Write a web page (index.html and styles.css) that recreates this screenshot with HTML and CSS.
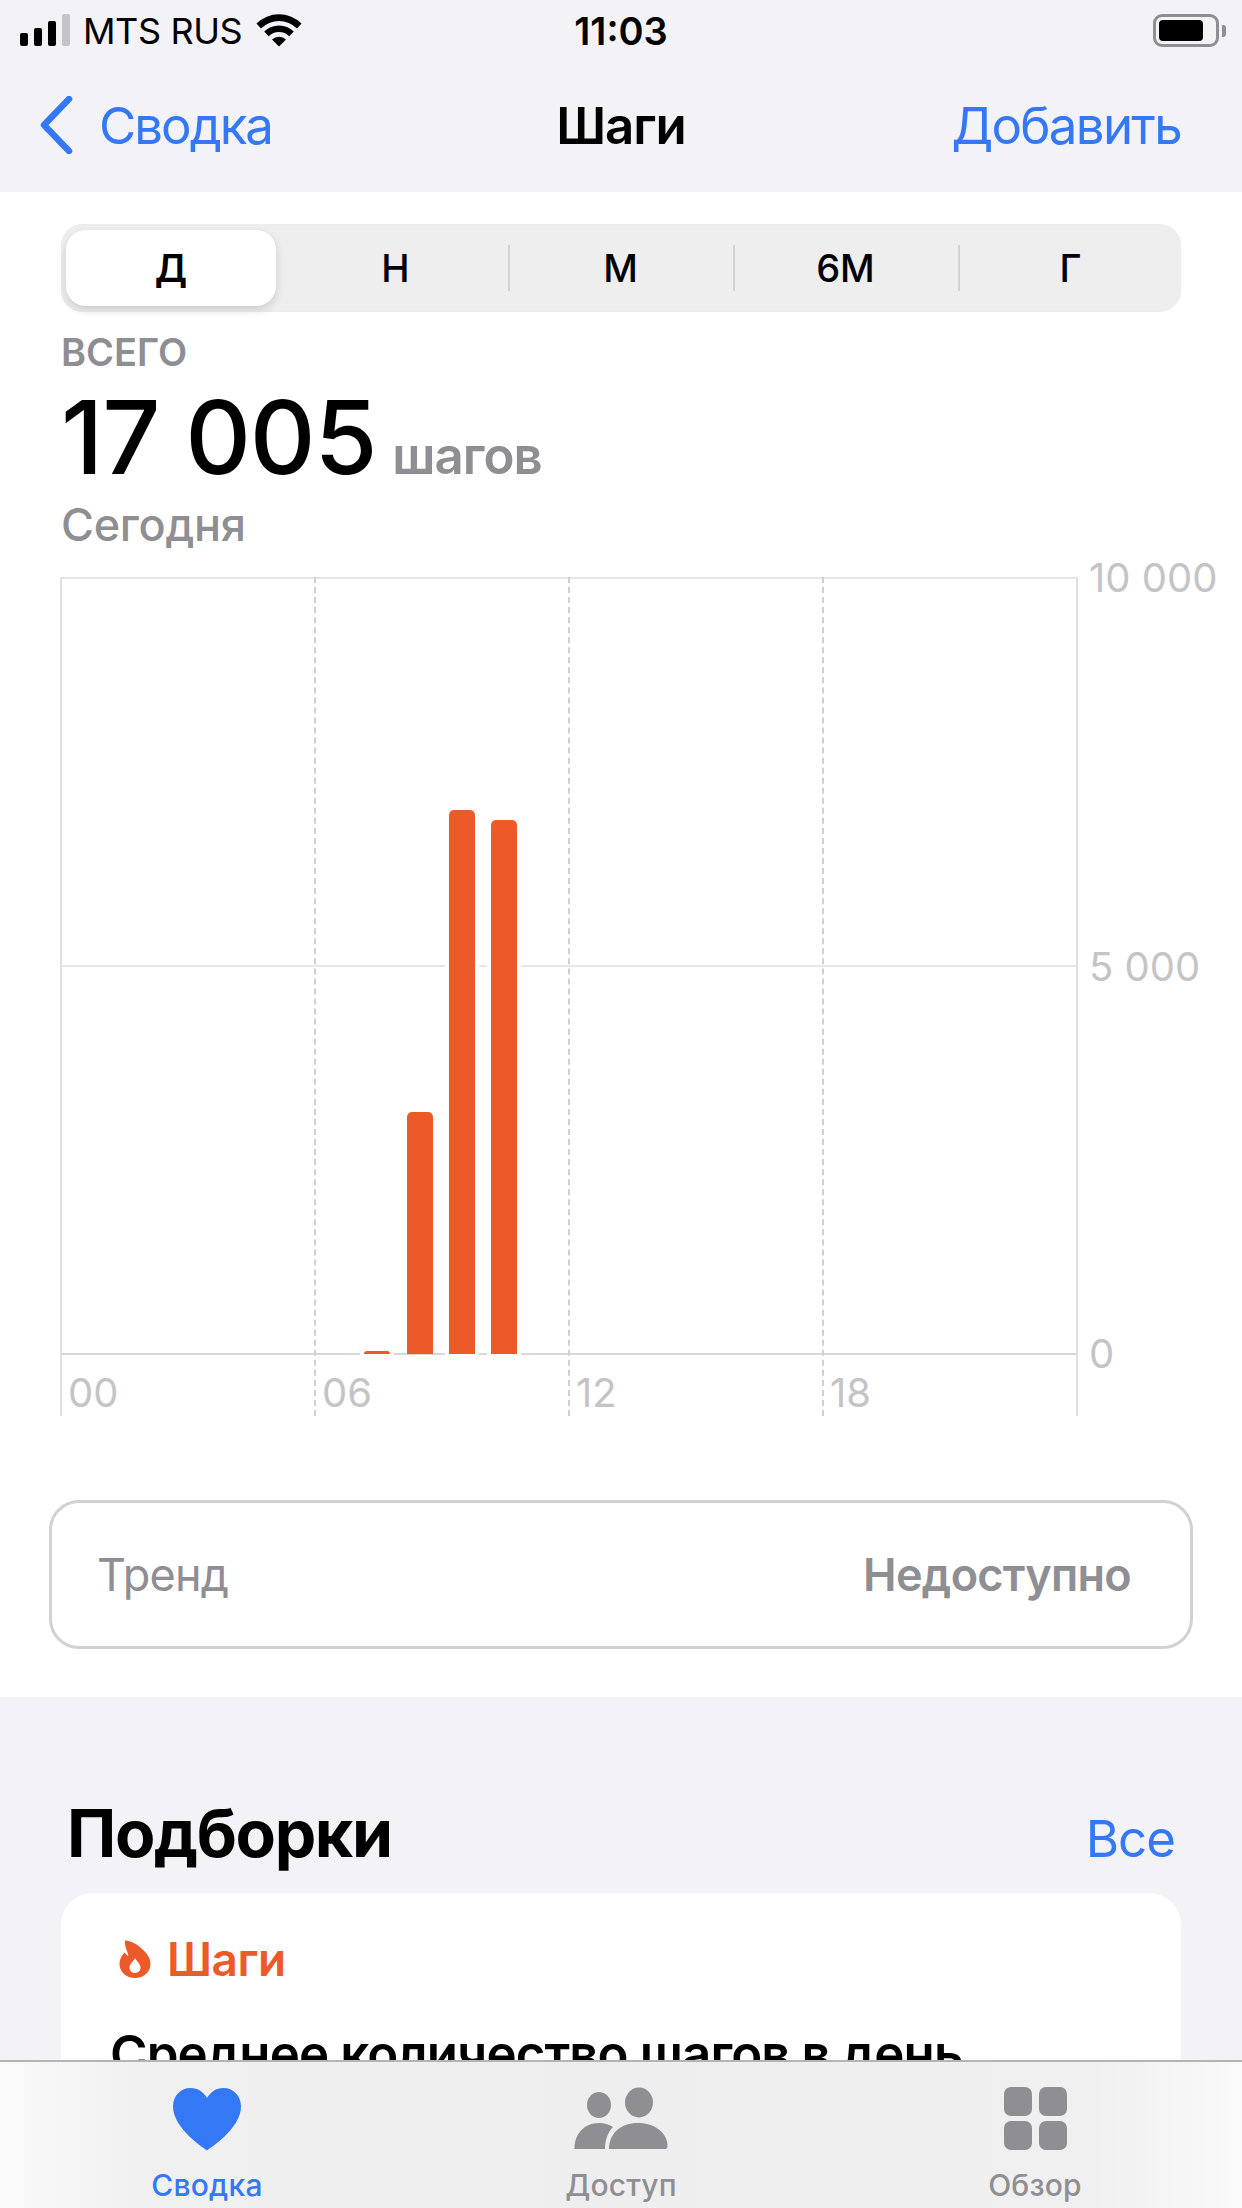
FILE: index.html
```html
<!DOCTYPE html>
<html lang="ru">
<head>
  <meta charset="UTF-8" />
  <meta name="viewport" content="width=device-width, initial-scale=1.0"/>
  <title>Шаги</title>
  <link rel="stylesheet" href="styles.css">
</head>
<body>
  <div class="screen">
    <!-- Status bar -->
    <div class="status-bar">
      <div class="status-left">
        <div class="signal">
          <span class="sig sig-1"></span>
          <span class="sig sig-2"></span>
          <span class="sig sig-3"></span>
          <span class="sig sig-4"></span>
        </div>
        <span class="carrier">MTS RUS</span>
        <svg class="wifi" width="46" height="34" viewBox="0 0 46 34">
          <path d="M0.5 10.5 A32 32 0 0 1 45.5 10.5 L41 15.5 A25.5 25.5 0 0 0 5 15.5 Z" fill="#000"/>
          <path d="M8.2 18.5 A21 21 0 0 1 37.8 18.5 L33.3 23.3 A14.5 14.5 0 0 0 12.7 23.3 Z" fill="#000"/>
          <path d="M16 26.5 A10 10 0 0 1 30 26.5 L23 33.5 Z" fill="#000"/>
        </svg>
      </div>
      <span class="clock">11:03</span>
      <div class="battery">
        <div class="battery-body"><div class="battery-fill"></div></div>
        <div class="battery-nub"></div>
      </div>
    </div>

    <!-- Navigation -->
    <nav class="nav">
      <div class="nav-back">
        <svg class="chevron" width="36" height="58" viewBox="0 0 36 58">
          <path d="M31 3 L6 29 L31 55" fill="none" stroke="#3478f6" stroke-width="6.5" stroke-linecap="round" stroke-linejoin="round"/>
        </svg>
        <span>Сводка</span>
      </div>
      <div class="nav-title">Шаги</div>
      <div class="nav-action">Добавить</div>
    </nav>

    <main class="panel">
      <!-- Period switch -->
      <div class="segments">
        <div class="segment active">Д</div>
        <div class="segment">Н</div>
        <div class="segment divided">М</div>
        <div class="segment divided">6М</div>
        <div class="segment divided">Г</div>
      </div>

      <div class="summary">
        <div class="summary-label">ВСЕГО</div>
        <div class="summary-value"><span class="big-number">17 005</span><span class="unit">шагов</span></div>
        <div class="summary-date">Сегодня</div>
      </div>

      <!-- Chart -->
      <div class="chart">
        <div class="plot" id="plot">
          <div class="hline hline-top"></div>
          <div class="hline hline-mid"></div>
          <div class="hline hline-base"></div>
          <div class="vline vline-6"></div>
          <div class="vline vline-12"></div>
          <div class="vline vline-18"></div>
          <div class="bar bar-tiny"></div>
          <div class="bar bar-8"></div>
          <div class="bar bar-9"></div>
          <div class="bar bar-10"></div>
          <div class="hours">
            <span>00</span>
            <span>06</span>
            <span>12</span>
            <span>18</span>
          </div>
        </div>
        <div class="y-axis">
          <span class="tick tick-top">10 000</span>
          <span class="tick tick-mid">5 000</span>
          <span class="tick tick-base">0</span>
        </div>
      </div>

      <div class="trend">
        <span class="trend-name">Тренд</span>
        <span class="trend-value">Недоступно</span>
      </div>
    </main>

    <section class="picks">
      <div class="picks-head">
        <h2>Подборки</h2>
        <span class="picks-all">Все</span>
      </div>
      <div class="card">
        <div class="card-tag">
          <svg class="flame" width="32" height="38" viewBox="0 0 32 38">
            <path fill-rule="evenodd" d="M6 0.5 C12 1 18 4 22 8 C28 13 31.5 18 31.5 24 C31.5 32 24.500 38 16 38 C7.500 38 0.500 32 0.500 24 C0.500 19 3 15.500 5.500 12.500 C7 14 8 15.500 9.500 16 C8.500 11 5 5.500 6 0.500 Z M16 18 C14.500 21 10.500 24 10.500 27.500 C10.500 30.800 13 33 16 33 C19 33 21.500 30.800 21.500 27.500 C21.500 24 17.500 21 16 18 Z" fill="#ec5a2a"/>
          </svg>
          <span>Шаги</span>
        </div>
        <div class="card-title">Среднее количество шагов в день</div>
      </div>
    </section>

    <!-- Tab bar -->
    <div class="tabbar">
      <div class="tab tab-active">
        <svg width="70" height="64" viewBox="0 0 70 64">
          <path d="M35 63.500 C33.500 62 1 42 1 19.500 C1 8.500 9 1 18.500 1 C26 1 31.500 5 35 11 C38.500 5 44 1 51.500 1 C61 1 69 8.500 69 19.500 C69 42 36.500 62 35 63.500 Z" fill="#3478f6"/>
        </svg>
        <span>Сводка</span>
      </div>
      <div class="tab">
        <svg width="94" height="64" viewBox="0 0 94 64">
          <ellipse cx="25" cy="18" rx="12" ry="13" fill="#8e8e93"/>
          <ellipse cx="65" cy="15.500" rx="14" ry="15" fill="#8e8e93"/>
          <path d="M0.500 62 C0.500 47 10 36 25 36 C30 36 35 37.500 39 40 C34 45 31 53 31 62 Z" fill="#8e8e93"/>
          <path d="M35 62 C35 46 47 36 64 36 C81 36 93.500 46 93.500 59 C93.500 61 92.500 62 91 62 Z" fill="#8e8e93"/>
        </svg>
        <span>Доступ</span>
      </div>
      <div class="tab">
        <div class="tab-grid">
          <i></i><i></i><i></i><i></i>
        </div>
        <span>Обзор</span>
      </div>
    </div>
  </div>
</body>
</html>
```

FILE: styles.css
```css
:root {
  --blue: #3478f6;
  --orange: #ec5a2a;
  --gray: #8e8e93;
  --light-gray: #c4c4c6;
  --bg: #f2f2f7;
}

* {
  box-sizing: border-box;
}

body {
  margin: 0;
  padding: 0;
  background: var(--bg);
  font-family: Inter, "Noto Sans", sans-serif;
  color: #000;
}

.screen {
  position: relative;
  width: 1242px;
  height: 2208px;
  overflow: hidden;
}

/* status bar */
.status-bar {
  height: 60px;
  display: flex;
  align-items: center;
  justify-content: space-between;
  padding: 1px 16px 0 20px;
  position: relative;
}

.status-left {
  display: flex;
  align-items: center;
}

.signal {
  display: flex;
  align-items: flex-end;
  gap: 6px;
  height: 32px;
  margin-top: -1px;
}

.sig {
  width: 8px;
  background: #000;
  border-radius: 2px;
}

.sig-1 { height: 13px; }
.sig-2 { height: 18px; }
.sig-3 { height: 25px; }
.sig-4 { height: 32px; background: #c4c4c8; }

.carrier {
  font-size: 36px;
  margin-left: 13px;
  letter-spacing: -0.4px;
}

.wifi {
  margin-left: 14px;
  margin-top: -1px;
}

.clock {
  position: absolute;
  left: 0;
  right: 0;
  text-align: center;
  font-size: 38px;
  font-weight: 600;
}

.battery {
  display: flex;
  align-items: center;
  gap: 3px;
}

.battery-body {
  width: 66px;
  height: 33px;
  border: 3px solid var(--gray);
  border-radius: 9px;
  padding: 3px;
}

.battery-fill {
  width: 44px;
  height: 100%;
  background: #000;
  border-radius: 4px;
}

.battery-nub {
  width: 4px;
  height: 12px;
  background: var(--gray);
  border-radius: 0 3px 3px 0;
}

/* navigation */
.nav {
  height: 132px;
  position: relative;
  display: flex;
  align-items: center;
  justify-content: space-between;
  padding: 0 61px 2px 38px;
  font-size: 51px;
  color: var(--blue);
}

.nav-back {
  display: flex;
  align-items: center;
  gap: 25px;
}

.nav-back span {
  letter-spacing: -2px;
}

.nav-title {
  position: absolute;
  left: 0;
  right: 0;
  text-align: center;
  color: #000;
  font-weight: 600;
  letter-spacing: -1px;
}

.nav-action {
  letter-spacing: -1.7px;
}

/* white panel */
.panel {
  background: #fff;
  height: 1505px;
  padding: 32px 49px 0 49px;
}

.segments {
  display: flex;
  align-items: center;
  height: 88px;
  margin: 0 12px;
  background: #eeeeef;
  border-radius: 22px;
  box-shadow: inset 0 0 0 1px #ececed;
}

.segment {
  flex: 0 0 225px;
  height: 76px;
  display: flex;
  align-items: center;
  justify-content: center;
  font-size: 38px;
  font-weight: 500;
  position: relative;
}

.segment.active {
  flex: 0 0 210px;
  margin: 0 7px 0 5px;
  background: #fff;
  border-radius: 20px;
  box-shadow: 0 4px 10px rgba(0, 0, 0, 0.14);
  font-weight: 600;
}

.segment.divided::before {
  content: "";
  position: absolute;
  left: 0;
  top: 15px;
  bottom: 15px;
  width: 2px;
  background: #d2d2d4;
}

.summary {
  margin: 0 12px;
  padding-top: 21px;
}

.summary-label {
  font-size: 38px;
  line-height: 38px;
  font-weight: 600;
  color: var(--gray);
}

.summary-value {
  display: flex;
  align-items: baseline;
  gap: 16px;
  height: 110px;
  line-height: 110px;
  margin-top: 11px;
}

.big-number {
  font-size: 102px;
  font-weight: 500;
  letter-spacing: -1.2px;
}

.unit {
  font-size: 51px;
  font-weight: 600;
  color: var(--gray);
  letter-spacing: -1px;
}

.summary-date {
  font-size: 45px;
  line-height: 50px;
  font-weight: 500;
  color: var(--gray);
  letter-spacing: -0.3px;
  margin-top: 8px;
}

/* chart */
.chart {
  display: flex;
  margin: 27px 0 0 11px;
  height: 839px;
}

.plot {
  position: relative;
  width: 1018px;
  border-left: 2px solid #e0e0e2;
  border-right: 2px solid #e0e0e2;
}

.hline {
  position: absolute;
  left: 0;
  right: 0;
  height: 2px;
  background: #e6e6e8;
}

.hline-top { top: 0; }
.hline-mid { top: 388px; }
.hline-base { top: 776px; background: #d8d8da; }

.vline {
  position: absolute;
  top: 0;
  bottom: 0;
  width: 0;
  border-left: 2px dashed #d0d0d2;
}

.vline-6 { left: 252px; }
.vline-12 { left: 506px; }
.vline-18 { left: 760px; }

.bar {
  position: absolute;
  bottom: 62px;
  width: 26px;
  background: var(--orange);
  border-radius: 5px 5px 0 0;
  box-shadow: 0 0 0 4px #fff;
}

.bar-tiny { left: 302px; height: 3px; border-radius: 3px 3px 0 0; }
.bar-8 { left: 345px; height: 242px; box-shadow: none; }
.bar-9 { left: 387px; height: 544px; }
.bar-10 { left: 429px; height: 534px; }

.hours {
  position: absolute;
  left: 0;
  right: 0;
  top: 793px;
  display: grid;
  grid-template-columns: repeat(4, 254px);
  font-size: 40px;
  line-height: 46px;
  color: var(--light-gray);
}

.hours span {
  padding-left: 6px;
}

.y-axis {
  position: relative;
  flex: 1;
  font-size: 40px;
  color: var(--light-gray);
}

.tick {
  position: absolute;
  left: 11px;
  line-height: 46px;
  white-space: nowrap;
}

.tick-top { top: -22px; }
.tick-mid { top: 367px; }
.tick-base { top: 754px; }

.trend {
  display: flex;
  align-items: center;
  justify-content: space-between;
  height: 149px;
  margin-top: 84px;
  padding: 0 59px 0 45px;
  border: 3px solid #d1d1d6;
  border-radius: 30px;
  font-size: 45px;
  color: var(--gray);
}

.trend-name {
  letter-spacing: -0.8px;
}

.trend-value {
  font-weight: 600;
  letter-spacing: -0.7px;
}

/* suggestions */
.picks {
  padding: 0 61px;
}

.picks-head {
  display: flex;
  align-items: baseline;
  justify-content: space-between;
  padding: 96px 6px 0 6px;
  height: 196px;
}

.picks-head h2 {
  margin: 0;
  font-size: 66px;
  font-weight: 700;
  line-height: 80px;
  letter-spacing: -1.4px;
}

.picks-all {
  font-size: 51px;
  color: var(--blue);
  letter-spacing: -1px;
}

.card {
  background: #fff;
  border-radius: 32px 32px 0 0;
  height: 400px;
  padding: 43px 49px;
}

.card-tag {
  display: flex;
  align-items: center;
  gap: 16px;
  margin-left: 9px;
  font-size: 46px;
  font-weight: 600;
  color: var(--orange);
  line-height: 46px;
  letter-spacing: -0.5px;
}

.card-title {
  margin-top: 43px;
  font-size: 51px;
  font-weight: 600;
  line-height: 58px;
  letter-spacing: -0.9px;
  white-space: nowrap;
}

/* tab bar */
.tabbar {
  position: absolute;
  left: 0;
  right: 0;
  bottom: 0;
  height: 148px;
  border-top: 2px solid #b4b4b6;
  background: linear-gradient(90deg, #fafafa 0%, #f0f0f0 12%, #eeeeee 50%, #f0f0f0 88%, #fafafa 100%);
  display: grid;
  grid-template-columns: 414px 414px 414px;
}

.tab {
  display: flex;
  flex-direction: column;
  align-items: center;
  padding-top: 25px;
  gap: 14px;
  font-size: 30px;
  font-weight: 500;
  line-height: 40px;
  letter-spacing: 0.2px;
  color: var(--gray);
}

.tab-active {
  color: var(--blue);
}

.tab svg {
  display: block;
}

.tab-grid {
  display: grid;
  grid-template-columns: 28px 28px;
  grid-template-rows: 29px 29px;
  gap: 5px 7px;
  height: 64px;
}

.tab-grid i {
  background: var(--gray);
  border-radius: 7px;
}
```
